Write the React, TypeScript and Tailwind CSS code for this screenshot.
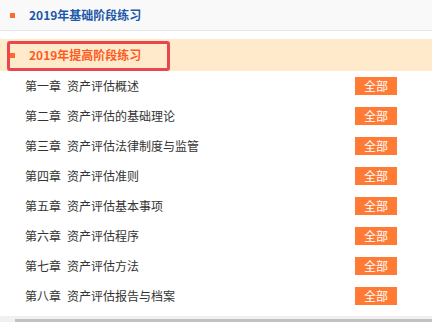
import * as React from "react";

const chapters = [
  ["第一章", "资产评估概述"],
  ["第二章", "资产评估的基础理论"],
  ["第三章", "资产评估法律制度与监管"],
  ["第四章", "资产评估准则"],
  ["第五章", "资产评估基本事项"],
  ["第六章", "资产评估程序"],
  ["第七章", "资产评估方法"],
  ["第八章", "资产评估报告与档案"],
];

const font = { fontFamily: '"Noto Sans CJK SC", "Liberation Sans", sans-serif' };

export default function App() {
  return (
    <div className="relative h-[322px] w-[432px] overflow-hidden bg-white" style={font}>
      <div className="flex h-[31px] items-center border-b border-[#e6e6e6] bg-[#f9f9f9] pl-[10px]">
        <span className="h-[5px] w-[5px] bg-[#ff6a2a]" />
        <span className="ml-[14px] text-[12px] font-bold text-[#1b58a8]">2019年基础阶段练习</span>
      </div>

      <div className="relative mt-[8px] flex h-[32px] items-center bg-[#ffebcc] pl-[10px]">
        <span className="h-[5px] w-[5px] bg-[#ff6a2a]" />
        <span className="ml-[14px] text-[12px] font-bold text-[#ff5a1e]">2019年提高阶段练习</span>
        <div className="absolute left-[7px] top-[2px] h-[30px] w-[163px] rounded-[3px] border-[3px] border-[#e8474d]" />
      </div>

      <ul>
        {chapters.map(([n, t]) => (
          <li key={n} className="flex h-[30px] items-center justify-between pl-[25px] pr-[35px]">
            <span className="flex gap-[6px] text-[12px] text-[#333]">
              <span>{n}</span>
              <span>{t}</span>
            </span>
            <span className="flex h-[18px] w-[42px] items-center justify-center bg-[#ff7a35] text-[12px] leading-none text-white">
              全部
            </span>
          </li>
        ))}
      </ul>

      <div className="absolute bottom-0 left-0 h-[6px] w-full bg-[#f0f0f0]">
        <div className="ml-[15px] mt-[3px] h-[3px] bg-[#c1c1c1]" />
      </div>
    </div>
  );
}
